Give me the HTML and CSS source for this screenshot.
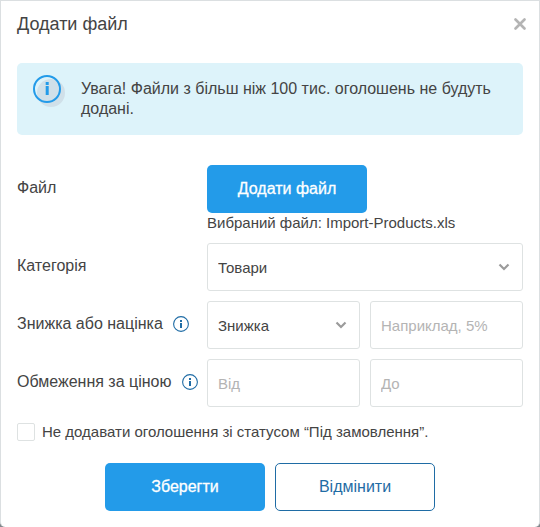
FILE: index.html
```
<!DOCTYPE html>
<html lang="uk">
<head>
    <meta charset="UTF-8">
    <meta name="viewport" content="width=device-width, initial-scale=1.0">
    <title>Додати файл</title>
    <link rel="stylesheet" href="styles.css">
</head>
<body>
    <div class="modal" role="dialog" aria-labelledby="modalTitle">
        <div class="modal-header">
            <h2 id="modalTitle">Додати файл</h2>
            <button type="button" class="close" aria-label="Закрити">
                <svg width="12" height="12" viewBox="0 0 12 12">
                    <path d="M1.5 1.5l9 9M10.5 1.5l-9 9" fill="none" stroke="#b4b4b4" stroke-width="2.6" stroke-linecap="round"/>
                </svg>
            </button>
        </div>

        <div class="notice">
            <svg class="notice-icon" width="32" height="32" viewBox="0 0 32 32">
                <circle cx="18" cy="18" r="14" fill="#d0e0e9"/>
                <circle cx="14" cy="14" r="13" fill="none" stroke="#239be9" stroke-width="2"/>
                <path d="M12.7 7h3v3h-3zM12.7 11h3v9h-3z" fill="#239be9"/>
            </svg>
            <p>Увага! Файли з більш ніж 100 тис. оголошень не будуть додані.</p>
        </div>

        <form class="form">
            <div class="row">
                <label class="row-label" for="addFile">Файл</label>
                <div class="file">
                    <button type="button" id="addFile" class="btn btn-primary">Додати файл</button>
                    <div class="file-name">Вибраний файл: Import-Products.xls</div>
                </div>
            </div>

            <div class="row">
                <label class="row-label" for="category">Категорія</label>
                <div class="fields">
                    <div class="select">
                        <select id="category">
                            <option>Товари</option>
                        </select>
                        <svg class="arrow" width="12" height="8" viewBox="0 0 12 8">
                            <path d="M1.5 1.5L6 6l4.5-4.5" fill="none" stroke="#9b9b9b" stroke-width="2.2"/>
                        </svg>
                    </div>
                </div>
            </div>

            <div class="row">
                <div class="row-label">
                    <label for="discountType">Знижка або націнка</label>
                    <svg width="16" height="16" viewBox="0 0 16 16">
                        <circle cx="8" cy="8" r="7.4" fill="none" stroke="#1f6ca5" stroke-width="1.1"/>
                        <path d="M7 4h2v2H7zM7 7h2v5H7z" fill="#1f6ca5"/>
                    </svg>
                </div>
                <div class="fields fields-two">
                    <div class="select">
                        <select id="discountType">
                            <option>Знижка</option>
                        </select>
                        <svg class="arrow" width="12" height="8" viewBox="0 0 12 8">
                            <path d="M1.5 1.5L6 6l4.5-4.5" fill="none" stroke="#9b9b9b" stroke-width="2.2"/>
                        </svg>
                    </div>
                    <input type="text" placeholder="Наприклад, 5%" aria-label="Розмір знижки або націнки">
                </div>
            </div>

            <div class="row">
                <div class="row-label">
                    <label for="priceFrom">Обмеження за ціною</label>
                    <svg width="16" height="16" viewBox="0 0 16 16">
                        <circle cx="8" cy="8" r="7.4" fill="none" stroke="#1f6ca5" stroke-width="1.1"/>
                        <path d="M7 4h2v2H7zM7 7h2v5H7z" fill="#1f6ca5"/>
                    </svg>
                </div>
                <div class="fields fields-two">
                    <input type="text" id="priceFrom" placeholder="Від">
                    <input type="text" placeholder="До" aria-label="Ціна до">
                </div>
            </div>

            <div class="check">
                <input type="checkbox" id="skipOrder">
                <label for="skipOrder">Не додавати оголошення зі статусом “Під замовлення”.</label>
            </div>

            <div class="buttons">
                <button type="submit" class="btn btn-primary">Зберегти</button>
                <button type="button" class="btn btn-outline">Відмінити</button>
            </div>
        </form>
    </div>
</body>
</html>
```
FILE: styles.css
```
* {
    box-sizing: border-box;
}

body {
    margin: 0;
    background-color: #82878c;
    font-family: "Liberation Sans", Arial, sans-serif;
    font-size: 15px;
    line-height: 20px;
    color: #444;
}

.modal {
    padding: 12px 16px 16px;
    background-color: #fff;
    border: 1px solid #dbdfe1;
    border-bottom: none;
    border-radius: 0 0 5px 5px;
}

.modal-header {
    display: flex;
    justify-content: space-between;
    align-items: center;
    margin-bottom: 28px;
}

.modal-header h2 {
    margin: 0;
    font-size: 18px;
    font-weight: normal;
    line-height: 22px;
}

.close {
    display: flex;
    padding: 0;
    margin-right: -3px;
    background: none;
    border: none;
    cursor: pointer;
}

.notice {
    display: flex;
    gap: 16px;
    padding: 12px 16px;
    min-height: 72px;
    margin-bottom: 30px;
    background-color: #ddf3fa;
    border-radius: 5px;
    font-size: 16px;
}

.notice-icon {
    flex-shrink: 0;
}

.notice p {
    margin: 4px 0 0;
}

.form {
    display: flex;
    flex-direction: column;
    gap: 10px;
}

.row {
    display: grid;
    grid-template-columns: 180px 1fr;
    column-gap: 10px;
    align-items: start;
}

.row-label {
    display: flex;
    align-items: center;
    gap: 10px;
    padding-top: 13px;
    font-size: 16px;
    white-space: nowrap;
}

.row-label svg {
    flex-shrink: 0;
}

.fields {
    display: grid;
    gap: 10px;
}

.fields-two {
    grid-template-columns: 1fr 1fr;
}

.fields input,
.select select {
    width: 100%;
    height: 48px;
    padding: 0 10px;
    background-color: #fff;
    border: 1px solid #dee2e2;
    border-radius: 3px;
    font-family: inherit;
    font-size: 15px;
    color: #444;
}

.fields input::placeholder {
    color: #b4b4b4;
}

.select {
    position: relative;
}

.select select {
    display: block;
    appearance: none;
}

.arrow {
    position: absolute;
    right: 13px;
    top: 20px;
    pointer-events: none;
}

.btn {
    width: 160px;
    height: 48px;
    padding: 0;
    border: none;
    border-radius: 5px;
    font-family: inherit;
    font-size: 16px;
    cursor: pointer;
}

.file .btn {
    display: block;
}

.btn-primary {
    background-color: #239be9;
    color: #fff;
    -webkit-text-stroke: 0.3px #fff;
}

.btn-outline {
    background-color: #fff;
    border: 1px solid #1f6ca5;
    color: #1f6ca5;
}

.check {
    display: flex;
    align-items: center;
    gap: 7px;
    padding-top: 5px;
}

.check input {
    appearance: none;
    width: 18px;
    height: 18px;
    margin: 0;
    background-color: #fff;
    border: 1px solid #dee2e2;
    border-radius: 2px;
}

.check input:checked {
    background-color: #239be9;
}

.buttons {
    display: flex;
    justify-content: center;
    gap: 10px;
    padding-top: 11px;
}
```
